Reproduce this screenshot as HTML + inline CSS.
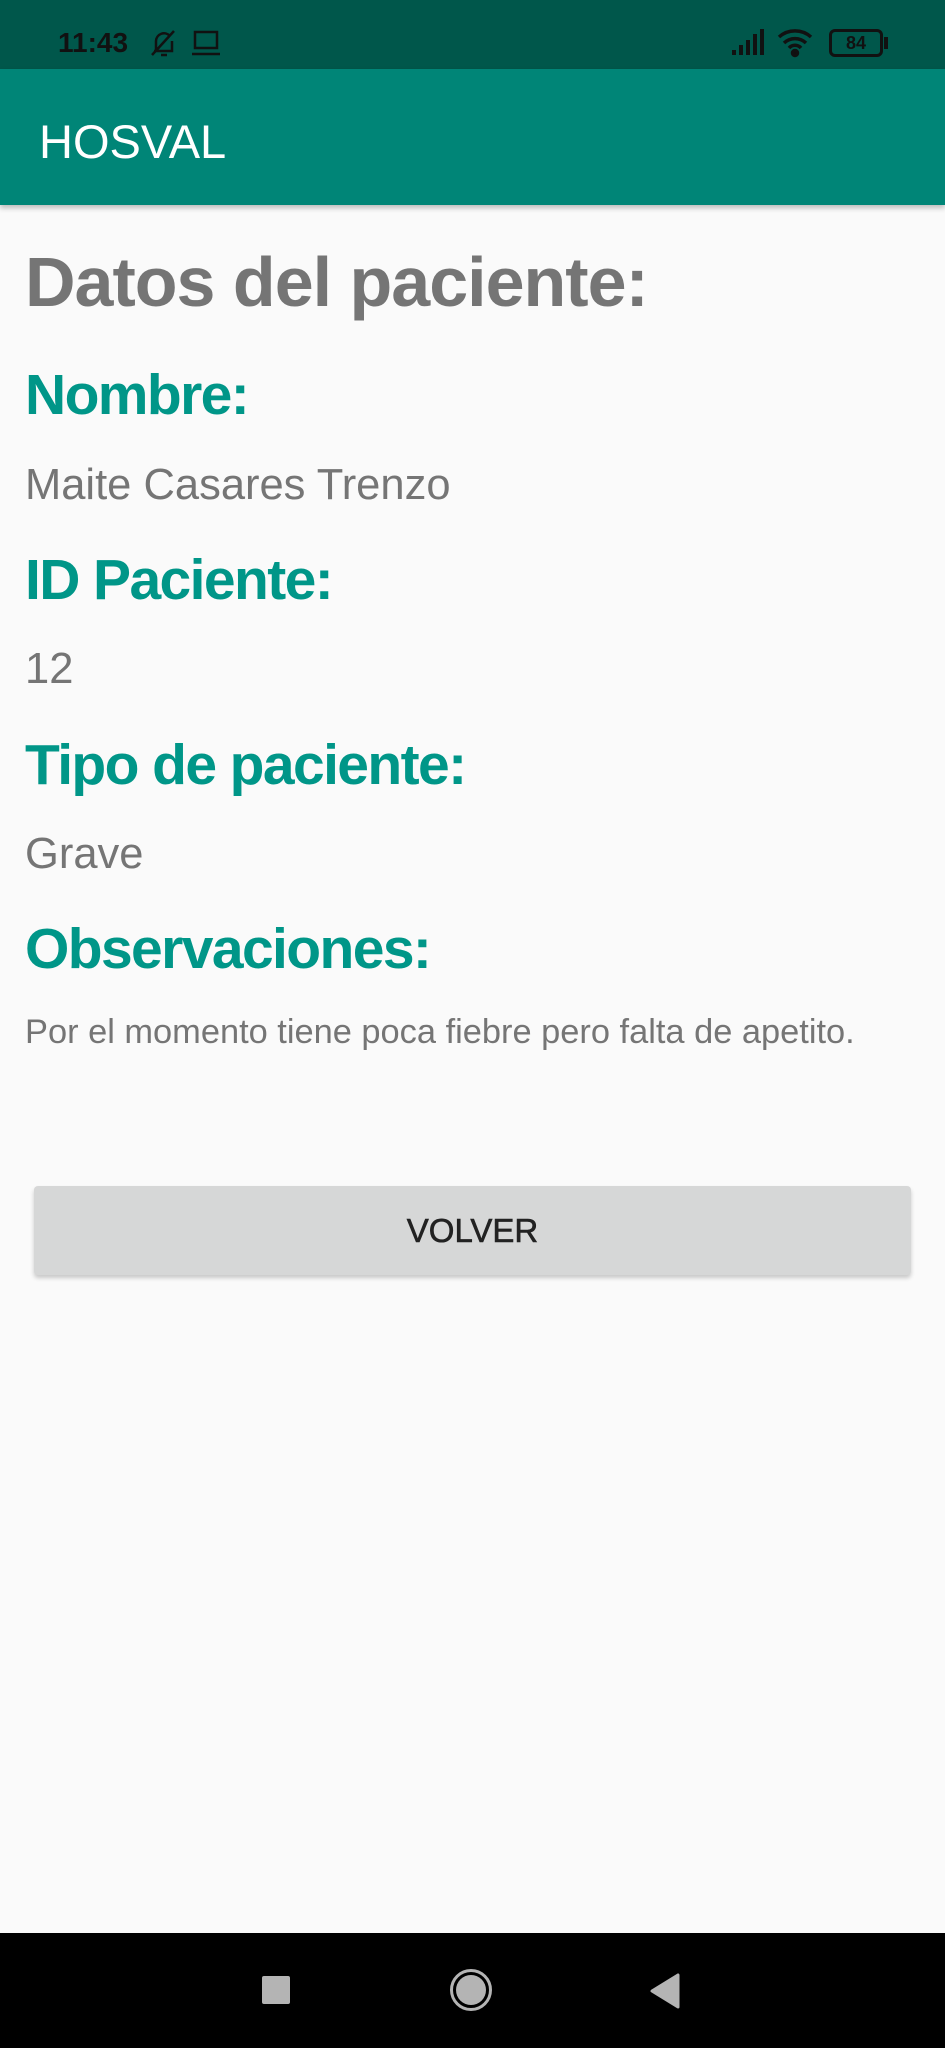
<!DOCTYPE html>
<html><head><meta charset="utf-8"><style>
*{margin:0;padding:0;box-sizing:border-box}
body{width:945px;height:2048px;background:#fafafa;font-family:"Liberation Sans",Roboto,sans-serif;position:relative;overflow:hidden}
.sb{position:absolute;top:0;left:0;width:945px;height:69px;background:#00574b}
.ab{position:absolute;top:69px;left:0;width:945px;height:136px;background:#008577;box-shadow:0 3px 5px rgba(0,0,0,.25)}
.t{position:absolute;left:0;white-space:nowrap;line-height:1}
.h{font-size:57px;font-weight:bold;color:#009688;letter-spacing:-1.6px}
.v{font-size:43.5px;color:#757575}
.nav{position:absolute;top:1933px;left:0;width:945px;height:115px;background:#000}
</style></head><body>
<div class="sb">
<div class="t" style="left:58px;top:29px;font-size:28px;font-weight:bold;color:#111">11:43</div>
<svg style="position:absolute;left:148px;top:27px" width="32" height="32" viewBox="0 0 32 32" fill="none" stroke="#111" stroke-width="2.5"><path d="M8 24V14a8 8 0 0 1 14-5M24 14v10H6M13 28h6M4 28L26 4"/></svg>
<svg style="position:absolute;left:190px;top:29px" width="32" height="28" viewBox="0 0 32 28" fill="none" stroke="#111" stroke-width="2.5"><rect x="5" y="3" width="22" height="16"/><path d="M2 25h28"/></svg>
<svg style="position:absolute;left:730px;top:28px" width="36" height="28" viewBox="0 0 36 28" fill="#111"><rect x="2" y="22" width="4" height="5"/><rect x="9" y="17" width="4" height="10"/><rect x="16" y="12" width="4" height="15"/><rect x="23" y="6" width="4" height="21"/><rect x="30" y="1" width="4" height="26"/></svg>
<svg style="position:absolute;left:776px;top:26px" width="40" height="32" viewBox="0 0 40 32" fill="none" stroke="#111" stroke-width="3.5"><path d="M3 11a24 24 0 0 1 32 0M8 17a16 16 0 0 1 22 0M13 22a8 8 0 0 1 12 0"/><circle cx="19" cy="27" r="2.5" fill="#111"/></svg>
<div style="position:absolute;left:829px;top:29px;width:54px;height:28px;border:3px solid #111;border-radius:6px;font-size:18px;color:#111;text-align:center;line-height:22px;font-weight:bold">84</div>
<div style="position:absolute;left:884px;top:37px;width:4px;height:12px;background:#111"></div>
</div>
<div class="ab"><div class="t" style="left:39px;top:49px;font-size:47px;color:#fff">HOSVAL</div></div>
<div class="t" style="left:25px;top:247px;font-size:70px;font-weight:bold;color:#757575;letter-spacing:-1px">Datos del paciente:</div>
<div class="t h" style="left:25px;top:367px">Nombre:</div>
<div class="t v" style="left:25px;top:464px">Maite Casares Trenzo</div>
<div class="t h" style="left:25px;top:552px">ID Paciente:</div>
<div class="t v" style="left:25px;top:648px">12</div>
<div class="t h" style="left:25px;top:737px">Tipo de paciente:</div>
<div class="t v" style="left:25px;top:833px">Grave</div>
<div class="t h" style="left:25px;top:921px">Observaciones:</div>
<div class="t" style="left:25px;top:1015px;font-size:34.4px;color:#757575">Por el momento tiene poca fiebre pero falta de apetito.</div>
<div style="position:absolute;left:34px;top:1186px;width:877px;height:89px;background:#d6d7d7;border-radius:4px;box-shadow:0 3px 4px rgba(0,0,0,.2);text-align:center;line-height:89px;font-size:33px;color:#222;-webkit-text-stroke:0.6px #222">VOLVER</div>
<div class="nav">
<div style="position:absolute;left:262px;top:43px;width:28px;height:28px;background:#b4b4b4;border-radius:2px"></div>
<div style="position:absolute;left:450px;top:36px;width:42px;height:42px;border:3px solid #b4b4b4;border-radius:50%"></div>
<div style="position:absolute;left:456px;top:42px;width:30px;height:30px;background:#b4b4b4;border-radius:50%"></div>
<svg style="position:absolute;left:650px;top:40px" width="30" height="36" viewBox="0 0 30 36"><path d="M28 2V34L2 18Z" fill="#b4b4b4" stroke="#b4b4b4" stroke-linejoin="round" stroke-width="3"/></svg>
</div>
</body></html>
